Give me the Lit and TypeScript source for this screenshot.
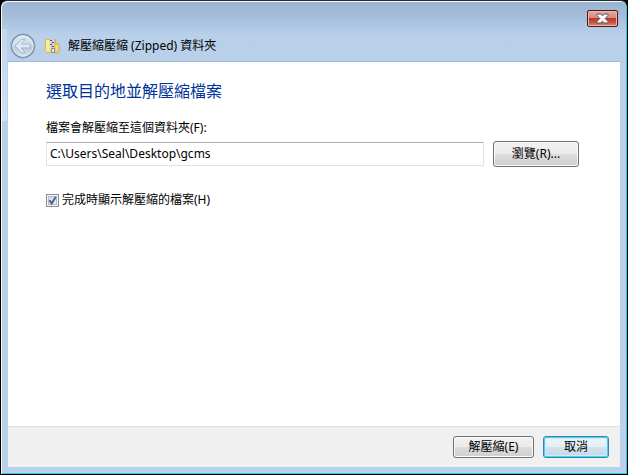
import { LitElement, html, css } from "lit";
import { customElement, state } from "lit/decorators.js";

@customElement("app-root")
export class AppRoot extends LitElement {
  @state() private path = "C:\\Users\\Seal\\Desktop\\gcms";
  @state() private showFiles = true;

  static styles = css`
    :host {
      display: block;
      background: #000;
      color: #000;
      font: 12px/16px "Noto Sans", "Noto Sans CJK TC", sans-serif;
    }
    * { box-sizing: border-box; }
    .window {
      display: flex;
      flex-direction: column;
      min-height: 100vh;
      padding: 0 6px 7px;
      border: 1px solid #000;
      border-top-color: #2b2a30;
      border-radius: 7px 7px 0 0;
      background:
        linear-gradient(#c3d6ec, #d3e1f0) 0 28px / 6px 92px no-repeat,
        linear-gradient(#9ab3d1, #a4bedb 16px, #b9d0ea 34px, #b9d1ea 100%);
      box-shadow: inset 1px 1px 0 #f4f9fd, inset -1px -1px 0 #2ccbe9;
    }
    .titlebar {
      display: flex;
      justify-content: flex-end;
      height: 28px;
      padding: 9px 3px 0 0;
    }
    .close {
      display: grid;
      place-items: center;
      width: 31px;
      height: 17px;
      padding: 0;
      border: 1px solid #4a1722;
      border-radius: 2px;
      background: linear-gradient(#e5a99e, #d48a7e 46%, #b83b28 50%, #c8513c 75%, #da8a74);
      box-shadow: inset 0 0 0 1px #ecb5a8;
    }
    .nav {
      display: flex;
      align-items: center;
      height: 33px;
      padding-left: 3px;
    }
    .back {
      width: 26px;
      height: 26px;
      padding: 0;
      border: 0;
      background: none;
    }
    svg { display: block; }
    .folder { margin: 0 8px 0 9px; }
    .title { margin: 0; font: inherit; }
    .panel {
      display: flex;
      flex: 1;
      flex-direction: column;
      margin: 0 1px;
      background: #fff;
      box-shadow: 0 -1px 0 #a5bbd5;
    }
    .content {
      flex: 1;
      padding: 17px 41px 16px 38px;
    }
    h2 {
      margin: 0 0 17px;
      color: #003399;
      font-size: 16px;
      font-weight: 400;
      line-height: 24px;
    }
    .label { display: block; margin-bottom: 5px; }
    .row { display: flex; gap: 9px; align-items: center; }
    .path {
      flex: 1;
      min-width: 0;
      height: 24px;
      padding: 0 3px 2px;
      border: 1px solid #e2e3ea;
      border-top-color: #abadb3;
      border-radius: 1px;
      outline: 0;
      background: #fff;
      color: #000;
      font: 12px/16px "Noto Sans", sans-serif;
    }
    .btn {
      height: 22px;
      padding: 0 14px;
      border: 1px solid #707070;
      border-radius: 3px;
      background: linear-gradient(#f2f2f2, #ebebeb 49%, #dddddd 50%, #cfcfcf);
      box-shadow: inset 0 0 0 1px #fafafa;
      color: #000;
      font: inherit;
      line-height: 18px;
      white-space: nowrap;
    }
    .browse { width: 86px; height: 26px; }
    .extract { width: 81px; }
    .cancel {
      width: 66px;
      border-color: #3c7fb1;
      background: linear-gradient(#eff5f8, #e5eff4 49%, #d3e3ec 50%, #c5d9e4);
      box-shadow: inset 0 0 0 1px #43d4f5, inset 0 0 0 2px #c9eef8;
    }
    .check {
      display: inline-flex;
      align-items: center;
      gap: 3px;
      margin-top: 25px;
    }
    .tick { display: grid; }
    .tick > * { grid-area: 1 / 1; }
    .tick svg { pointer-events: none; visibility: hidden; }
    .box {
      appearance: none;
      width: 13px;
      height: 13px;
      margin: 0;
      border: 1px solid #8e8f8f;
      background: linear-gradient(135deg, #cbcfd5, #f6f6f6);
      box-shadow: inset 0 0 0 1px #f4f4f4, inset 0 0 0 2px #b8bdc6;
    }
    .box:checked + svg { visibility: visible; }
    .footer {
      display: flex;
      justify-content: flex-end;
      gap: 9px;
      height: 41px;
      padding: 9px 11px 0;
      border-top: 1px solid #dfdfdf;
      background: #f0f0f0;
    }
  `;

  render() {
    return html`
      <main class="window">
        <div class="titlebar">
          <button class="close" aria-label="關閉">
            <svg width="13" height="11" viewBox="0 0 13 11">
              <path d="M1 1h3.8l1.7 1.9L8.2 1H12v1.5L9.1 5.5 12 8.5V10H8.2L6.5 8.1 4.8 10H1V8.5l2.9-3L1 2.5z" fill="#fff" stroke="#5d5562"/>
            </svg>
          </button>
        </div>
        <header class="nav">
          <button class="back" aria-label="上一頁" disabled>
            <svg width="26" height="26" viewBox="0 0 26 26">
              <defs>
                <linearGradient id="g" x2="0" y2="1">
                  <stop offset="0" stop-color="#dfe9f4"/>
                  <stop offset=".48" stop-color="#c9d9ea"/>
                  <stop offset=".52" stop-color="#b3c8de"/>
                  <stop offset="1" stop-color="#d3e5f5"/>
                </linearGradient>
              </defs>
              <circle cx="13" cy="13" r="12.3" fill="none" stroke="#a3b8d0" stroke-width="1"/>
              <circle cx="13" cy="13" r="11.3" fill="url(#g)" stroke="#7d8ea3" stroke-width="1.2"/>
              <circle cx="13" cy="13" r="10.2" fill="none" stroke="#e4eef8" stroke-width=".8"/>
              <path d="M5 13l7-6.8h3.4l-4.2 4.9H20v3.8h-8.8l4.2 4.9H12z" fill="#e0e9f3" stroke="#a2b4ca" stroke-width=".9" stroke-linejoin="round"/>
            </svg>
          </button>
          <svg class="folder" width="15" height="16" viewBox="0 0 15 16">
            <path d="M.5 1.5h8v13h-7l-1-1z" fill="#f5dc7c" stroke="#dcba55"/>
            <path d="M1 2h3v11H1z" fill="#fbeaa2"/>
            <path d="M9 1.5h1.5v4H13l1 1V14l-1 1H9z" fill="#efcd62" stroke="#cfa947" stroke-width=".8"/>
            <path d="M5 1h4v10H5z" fill="#dfe3e8"/>
            <path d="M5 2.5h2M7 4.5h2M5 6.5h2M7 8.5h2" stroke="#3d5686"/>
            <path d="M7 1v10" stroke="#8295ad" stroke-width=".8"/>
            <path d="M6.5 10.5h3v4h-3z" fill="#e4e9ed" stroke="#657c94" stroke-width=".8"/>
            <path d="M12 7.5v5" stroke="#fff0ad"/>
          </svg>
          <h1 class="title">解壓縮壓縮 (Zipped) 資料夾</h1>
        </header>
        <section class="panel">
          <div class="content">
            <h2>選取目的地並解壓縮檔案</h2>
            <label class="label" for="path">檔案會解壓縮至這個資料夾(F):</label>
            <div class="row">
              <input class="path" id="path" type="text" spellcheck="false" .value=${this.path}
                @input=${(e: Event) => (this.path = (e.target as HTMLInputElement).value)} />
              <button class="btn browse">瀏覽(R)...</button>
            </div>
            <label class="check">
              <span class="tick">
                <input class="box" type="checkbox" .checked=${this.showFiles}
                  @change=${(e: Event) => (this.showFiles = (e.target as HTMLInputElement).checked)} />
                <svg width="13" height="13" viewBox="0 0 13 13">
                  <path d="M3.5 6.2l2.2 3.2 4-6.4" fill="none" stroke="#465a9c" stroke-width="1.9"/>
                </svg>
              </span>
              完成時顯示解壓縮的檔案(H)
            </label>
          </div>
          <footer class="footer">
            <button class="btn extract">解壓縮(E)</button>
            <button class="btn cancel">取消</button>
          </footer>
        </section>
      </main>
    `;
  }
}
